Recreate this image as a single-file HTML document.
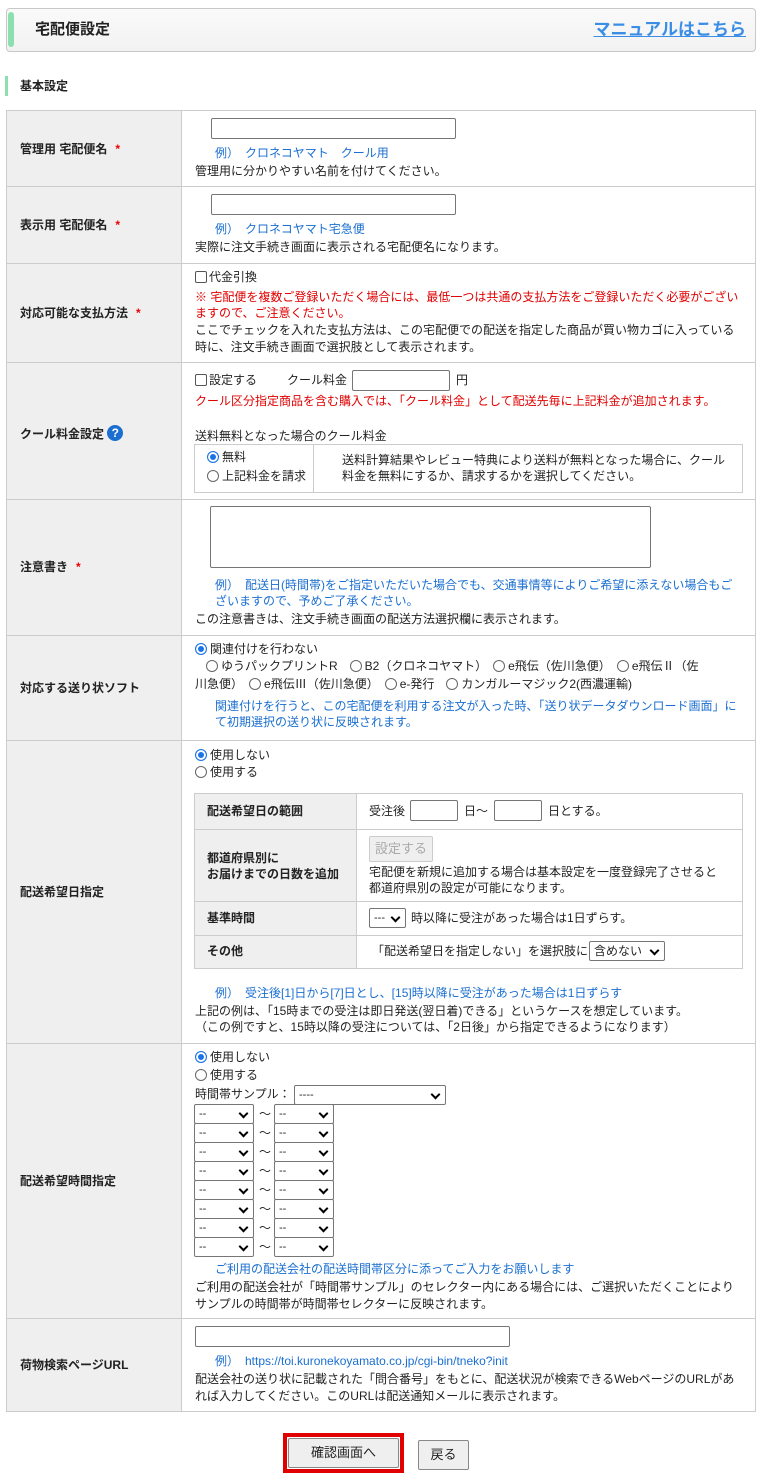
<!DOCTYPE html>
<html><head><meta charset="utf-8"><style>
*{margin:0;padding:0;box-sizing:border-box}
body{width:765px;height:1480px;background:#fff;position:relative;font-family:"Liberation Sans","Noto Sans CJK JP",sans-serif;font-size:12px;color:#222;overflow:hidden}
.a{position:absolute;white-space:nowrap;line-height:16px}
.b{color:#1a6fd0}.r{color:#e00000}
.lab{position:absolute;left:6px;width:176px;background:#efefef;border:1px solid #ccc;border-right:none}
.cel{position:absolute;left:181px;width:575px;border:1px solid #ccc}
.lt{position:absolute;left:13px;font-weight:bold;line-height:16px;white-space:nowrap}
.lt i{color:#e00;font-style:normal;margin-left:8px}
.in{position:absolute;border:1px solid #767676;border-radius:2px;background:#fff}
.rb{display:inline-block;width:12px;height:12px;border:1px solid #666;border-radius:50%;vertical-align:-2px;margin-right:3px;background:#fff}
.rb.on{border:1px solid #1a73e8;box-shadow:inset 0 0 0 2px #fff;background:#1a73e8}
.cb{display:inline-block;width:12px;height:12px;border:1px solid #555;border-radius:2px;vertical-align:-2px;margin-right:2px}
.sel{position:absolute;border:1px solid #767676;border-radius:2px;background:#fff;height:20px;font-size:11px;line-height:18px;padding-left:4px}
.sel:after{content:"";position:absolute;right:6px;top:5px;width:5px;height:5px;border-right:2px solid #000;border-bottom:2px solid #000;transform:rotate(45deg)}
.it{position:absolute;border:1px solid #ccc}
.itl{position:absolute;background:#efefef;border-right:1px solid #ccc;left:0;top:0;bottom:0}
.hr{position:absolute;left:0;right:0;height:1px;background:#ccc}
</style></head><body>

<div style="position:absolute;left:6px;top:8px;width:750px;height:44px;border:1px solid #c8c8c8;border-radius:4px;background:linear-gradient(#fafafa,#f2f2f2)"></div>
<div style="position:absolute;left:8px;top:12px;width:6px;height:35px;background:#8ddfb0;border-radius:3px"></div>
<div class="a" style="left:35px;top:22px;font-size:15px;font-weight:bold">宅配便設定</div>
<div class="a" style="right:19px;top:20px;font-size:17px;line-height:20px;font-weight:bold;color:#3a8ee6;text-decoration:underline">マニュアルはこちら</div>

<div style="position:absolute;left:5px;top:76px;width:3px;height:20px;background:#8ddfb0"></div>
<div class="a" style="left:20px;top:78px;font-weight:bold">基本設定</div>

<div class="lab" style="top:110px;height:77px"><div class="lt" style="top:30px">管理用 宅配便名<i>*</i></div></div>
<div class="cel" style="top:110px;height:77px"></div>
<div class="in" style="left:211px;top:118px;width:245px;height:21px"></div>
<div class="a b" style="left:215px;top:145px">例）　クロネコヤマト　クール用</div>
<div class="a" style="left:195px;top:163px">管理用に分かりやすい名前を付けてください。</div>

<div class="lab" style="top:186px;height:78px"><div class="lt" style="top:30px">表示用 宅配便名<i>*</i></div></div>
<div class="cel" style="top:186px;height:78px"></div>
<div class="in" style="left:211px;top:194px;width:245px;height:21px"></div>
<div class="a b" style="left:215px;top:221px">例）　クロネコヤマト宅急便</div>
<div class="a" style="left:195px;top:239px">実際に注文手続き画面に表示される宅配便名になります。</div>

<div class="lab" style="top:263px;height:100px"><div class="lt" style="top:41px">対応可能な支払方法<i>*</i></div></div>
<div class="cel" style="top:263px;height:100px"></div>
<div class="a" style="left:195px;top:269px"><span class="cb"></span>代金引換</div>
<div class="a r" style="left:195px;top:289px">※ 宅配便を複数ご登録いただく場合には、最低一つは共通の支払方法をご登録いただく必要がござい</div>
<div class="a r" style="left:195px;top:305px">ますので、ご注意ください。</div>
<div class="a" style="left:195px;top:322px">ここでチェックを入れた支払方法は、この宅配便での配送を指定した商品が買い物カゴに入っている</div>
<div class="a" style="left:195px;top:339px">時に、注文手続き画面で選択肢として表示されます。</div>

<div class="lab" style="top:362px;height:138px"><div class="lt" style="top:62px">クール料金設定 <span style="display:inline-block;width:16px;height:16px;border-radius:50%;background:#1a6fd0;color:#fff;text-align:center;font-size:12px;line-height:16px;vertical-align:1px">?</span></div></div>
<div class="cel" style="top:362px;height:138px"></div>
<div class="a" style="left:195px;top:372px"><span class="cb"></span>設定する</div>
<div class="a" style="left:287px;top:372px">クール料金</div>
<div class="in" style="left:352px;top:370px;width:98px;height:21px"></div>
<div class="a" style="left:456px;top:372px">円</div>
<div class="a r" style="left:195px;top:393px">クール区分指定商品を含む購入では、「クール料金」として配送先毎に上記料金が追加されます。</div>
<div class="a" style="left:195px;top:428px">送料無料となった場合のクール料金</div>
<div class="it" style="left:194px;top:444px;width:549px;height:49px"><div style="position:absolute;left:118px;top:0;bottom:0;width:1px;background:#ccc"></div></div>
<div class="a" style="left:207px;top:449px"><span class="rb on"></span>無料</div>
<div class="a" style="left:207px;top:468px"><span class="rb"></span>上記料金を請求</div>
<div class="a" style="left:342px;top:452px">送料計算結果やレビュー特典により送料が無料となった場合に、クール</div>
<div class="a" style="left:342px;top:468px">料金を無料にするか、請求するかを選択してください。</div>

<div class="lab" style="top:499px;height:137px"><div class="lt" style="top:59px">注意書き<i>*</i></div></div>
<div class="cel" style="top:499px;height:137px"></div>
<div class="in" style="left:210px;top:506px;width:441px;height:62px"></div>
<div class="a b" style="left:215px;top:577px">例）　配送日(時間帯)をご指定いただいた場合でも、交通事情等によりご希望に添えない場合もご</div>
<div class="a b" style="left:215px;top:593px">ざいますので、予めご了承ください。</div>
<div class="a" style="left:195px;top:611px">この注意書きは、注文手続き画面の配送方法選択欄に表示されます。</div>

<div class="lab" style="top:635px;height:106px"><div class="lt" style="top:44px">対応する送り状ソフト</div></div>
<div class="cel" style="top:635px;height:106px"></div>
<div class="a" style="left:195px;top:641px"><span class="rb on"></span>関連付けを行わない</div>
<div class="a" style="left:206px;top:658px"><span class="rb"></span>ゆうパックプリントR　<span class="rb"></span>B2（クロネコヤマト）　<span class="rb"></span>e飛伝（佐川急便）　<span class="rb"></span>e飛伝Ⅱ（佐</div>
<div class="a" style="left:195px;top:676px">川急便）　<span class="rb"></span>e飛伝Ⅲ（佐川急便）　<span class="rb"></span>e-発行　<span class="rb"></span>カンガルーマジック2(西濃運輸)</div>
<div class="a b" style="left:215px;top:698px">関連付けを行うと、この宅配便を利用する注文が入った時、「送り状データダウンロード画面」に</div>
<div class="a b" style="left:215px;top:714px">て初期選択の送り状に反映されます。</div>

<div class="lab" style="top:740px;height:304px"><div class="lt" style="top:143px">配送希望日指定</div></div>
<div class="cel" style="top:740px;height:304px"></div>
<div class="a" style="left:195px;top:747px"><span class="rb on"></span>使用しない</div>
<div class="a" style="left:195px;top:764px"><span class="rb"></span>使用する</div>
<div class="it" style="left:194px;top:793px;width:549px;height:176px">
<div class="itl" style="width:162px"></div>
<div class="hr" style="top:35px"></div><div class="hr" style="top:107px"></div><div class="hr" style="top:141px"></div>
<div class="a" style="left:12px;top:9px;font-weight:bold">配送希望日の範囲</div>
<div class="a" style="left:12px;top:56px;font-weight:bold">都道府県別に</div>
<div class="a" style="left:12px;top:72px;font-weight:bold">お届けまでの日数を追加</div>
<div class="a" style="left:12px;top:116px;font-weight:bold">基準時間</div>
<div class="a" style="left:12px;top:149px;font-weight:bold">その他</div>
</div>
<div class="a" style="left:369px;top:803px">受注後</div>
<div class="in" style="left:410px;top:800px;width:48px;height:21px"></div>
<div class="a" style="left:464px;top:803px">日～</div>
<div class="in" style="left:494px;top:800px;width:48px;height:21px"></div>
<div class="a" style="left:548px;top:803px">日とする。</div>
<div style="position:absolute;left:369px;top:836px;width:64px;height:26px;border:1px solid #ccc;border-radius:2px;background:#efefef;color:#aaa;font-size:13px;text-align:center;line-height:24px">設定する</div>
<div class="a" style="left:369px;top:864px">宅配便を新規に追加する場合は基本設定を一度登録完了させると</div>
<div class="a" style="left:369px;top:880px">都道府県別の設定が可能になります。</div>
<div class="sel" style="left:369px;top:908px;width:37px">---</div>
<div class="a" style="left:411px;top:910px">時以降に受注があった場合は1日ずらす。</div>
<div class="a" style="left:372px;top:943px">「配送希望日を指定しない」を選択肢に</div>
<div class="sel" style="left:589px;top:941px;width:76px;font-size:12px">含めない</div>
<div class="a b" style="left:215px;top:985px">例）　受注後[1]日から[7]日とし、[15]時以降に受注があった場合は1日ずらす</div>
<div class="a" style="left:195px;top:1003px">上記の例は、「15時までの受注は即日発送(翌日着)できる」というケースを想定しています。</div>
<div class="a" style="left:195px;top:1019px">（この例ですと、15時以降の受注については、「2日後」から指定できるようになります）</div>

<div class="lab" style="top:1043px;height:276px"><div class="lt" style="top:129px">配送希望時間指定</div></div>
<div class="cel" style="top:1043px;height:276px"></div>
<div class="a" style="left:195px;top:1049px"><span class="rb on"></span>使用しない</div>
<div class="a" style="left:195px;top:1067px"><span class="rb"></span>使用する</div>
<div class="a" style="left:195px;top:1086px">時間帯サンプル：</div>
<div class="sel" style="left:294px;top:1085px;width:152px">----</div>
<div id="ts"></div>
<div class="a b" style="left:215px;top:1261px">ご利用の配送会社の配送時間帯区分に添ってご入力をお願いします</div>
<div class="a" style="left:195px;top:1279px">ご利用の配送会社が「時間帯サンプル」のセレクター内にある場合には、ご選択いただくことにより</div>
<div class="a" style="left:195px;top:1296px">サンプルの時間帯が時間帯セレクターに反映されます。</div>

<div class="lab" style="top:1318px;height:94px"><div class="lt" style="top:38px">荷物検索ページURL</div></div>
<div class="cel" style="top:1318px;height:94px"></div>
<div class="in" style="left:195px;top:1326px;width:315px;height:21px"></div>
<div class="a b" style="left:215px;top:1353px">例）　https://toi.kuronekoyamato.co.jp/cgi-bin/tneko?init</div>
<div class="a" style="left:195px;top:1371px">配送会社の送り状に記載された「問合番号」をもとに、配送状況が検索できるWebページのURLがあ</div>
<div class="a" style="left:195px;top:1388px">れば入力してください。このURLは配送通知メールに表示されます。</div>

<div style="position:absolute;left:283px;top:1433px;width:121px;height:40px;border:4px solid #e00000"></div>
<div style="position:absolute;left:288px;top:1438px;width:111px;height:30px;border:1px solid #888;border-radius:2px;background:#efefef;text-align:center;line-height:28px;font-size:13px">確認画面へ</div>
<div style="position:absolute;left:418px;top:1440px;width:51px;height:30px;border:1px solid #888;border-radius:2px;background:#efefef;text-align:center;line-height:28px;font-size:13px">戻る</div>

<script>
var h='';for(var i=0;i<8;i++){var t=1104+i*19;h+='<div class="sel" style="left:194px;top:'+t+'px;width:60px">--</div><div class="a" style="left:259px;top:'+(t+2)+'px">～</div><div class="sel" style="left:274px;top:'+t+'px;width:60px">--</div>';}
document.getElementById('ts').outerHTML=h;
</script>
</body></html>
